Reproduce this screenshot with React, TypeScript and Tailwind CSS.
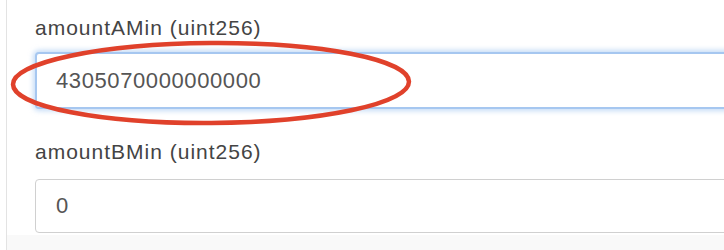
export default function App() {
  return (
    <div className="relative h-[250px] w-[724px] overflow-hidden bg-white font-['Liberation_Sans',Arial,sans-serif]">
      <div className="ml-[6px] flex h-full flex-col border-l border-[#e3e3e3]">
        <div className="flex flex-col pl-[28px] pt-[15px]">
          <label className="h-[26px] text-[21px] leading-[26px] tracking-[1px] text-[#444]">
            amountAMin (uint256)
          </label>
          <input
            readOnly
            value="4305070000000000"
            className="mt-[11px] h-[57px] w-[800px] rounded-[4px] border-2 border-[#a6c7f0] bg-white px-[19px] text-[22px] tracking-[0.6px] text-[#555] shadow-[0_0_5px_2px_rgba(160,198,242,0.6)] outline-none"
          />
          <label className="mt-[30px] h-[26px] text-[21px] leading-[26px] tracking-[1px] text-[#444]">
            amountBMin (uint256)
          </label>
          <input
            readOnly
            value="0"
            className="mt-[14px] h-[54px] w-[800px] rounded-[4px] border border-[#d0d0d0] bg-white px-[20px] text-[22px] tracking-[0.6px] text-[#555] outline-none"
          />
        </div>
        <div className="mt-[2px] flex-1 bg-[#f9f9f9]" />
      </div>
      <svg
        className="pointer-events-none absolute left-0 top-0"
        width="724"
        height="250"
        viewBox="0 0 724 250"
      >
        <ellipse
          cx="211"
          cy="83"
          rx="198"
          ry="40"
          fill="none"
          stroke="#e0412b"
          strokeWidth="4.5"
          transform="rotate(-0.4 211 83)"
        />
      </svg>
    </div>
  );
}
